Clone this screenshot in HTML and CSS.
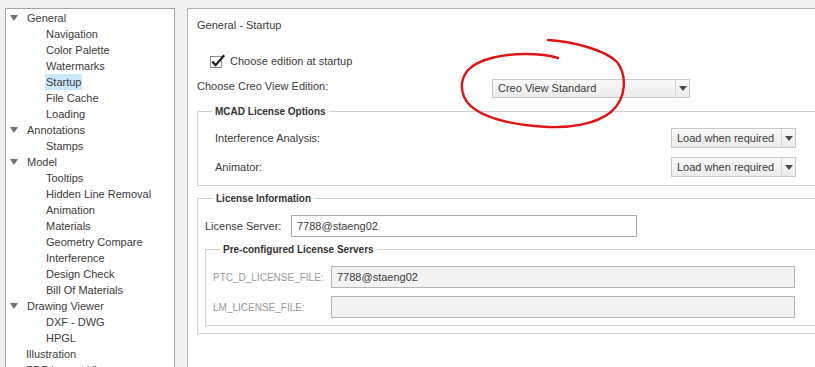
FILE: index.html
```html
<!DOCTYPE html>
<html>
  <head>
    <title>Preferences - General - Startup</title>
    <link rel="stylesheet" href="styles.css">
  </head>
  <body>
    <div class="window">
      <div class="tree">
        <div class="tree-item parent"><span class="toggle"></span><span class="label">General</span></div>
        <div class="tree-item child"><span class="label">Navigation</span></div>
        <div class="tree-item child"><span class="label">Color Palette</span></div>
        <div class="tree-item child"><span class="label">Watermarks</span></div>
        <div class="tree-item child"><span class="label selected">Startup</span></div>
        <div class="tree-item child"><span class="label">File Cache</span></div>
        <div class="tree-item child"><span class="label">Loading</span></div>
        <div class="tree-item parent"><span class="toggle"></span><span class="label">Annotations</span></div>
        <div class="tree-item child"><span class="label">Stamps</span></div>
        <div class="tree-item parent"><span class="toggle"></span><span class="label">Model</span></div>
        <div class="tree-item child"><span class="label">Tooltips</span></div>
        <div class="tree-item child"><span class="label">Hidden Line Removal</span></div>
        <div class="tree-item child"><span class="label">Animation</span></div>
        <div class="tree-item child"><span class="label">Materials</span></div>
        <div class="tree-item child"><span class="label">Geometry Compare</span></div>
        <div class="tree-item child"><span class="label">Interference</span></div>
        <div class="tree-item child"><span class="label">Design Check</span></div>
        <div class="tree-item child"><span class="label">Bill Of Materials</span></div>
        <div class="tree-item parent"><span class="toggle"></span><span class="label">Drawing Viewer</span></div>
        <div class="tree-item child"><span class="label">DXF - DWG</span></div>
        <div class="tree-item child"><span class="label">HPGL</span></div>
        <div class="tree-item leaf"><span class="label">Illustration</span></div>
        <div class="tree-item leaf"><span class="label">PDF Layout Viewer</span></div>
      </div>

      <div class="page">
        <p class="page-title">General - Startup</p>

        <div class="check-row">
          <svg class="checkbox" width="16" height="14" viewBox="0 0 16 14">
            <rect x="0.5" y="2.5" width="11" height="11" fill="#fff" stroke="#8c8c8c"/>
            <path d="M2.3 7.6 L5.6 11.2 L14.2 1.2" fill="none" stroke="#1e1e1e" stroke-width="2.2" stroke-linejoin="miter"/>
          </svg>
          <span>Choose edition at startup</span>
        </div>

        <div class="edition-row">
          <span class="edition-label">Choose Creo View Edition:</span>
          <div class="combo combo-edition">
            <span class="combo-text">Creo View Standard</span>
            <span class="combo-arrow"></span>
          </div>
        </div>

        <fieldset class="group group-mcad">
          <legend>MCAD License Options</legend>
          <div class="option-row">
            <span>Interference Analysis:</span>
            <div class="combo combo-load">
              <span class="combo-text">Load when required</span>
              <span class="combo-arrow"></span>
            </div>
          </div>
          <div class="option-row">
            <span>Animator:</span>
            <div class="combo combo-load">
              <span class="combo-text">Load when required</span>
              <span class="combo-arrow"></span>
            </div>
          </div>
        </fieldset>

        <fieldset class="group group-license">
          <legend>License Information</legend>
          <div class="server-row">
            <span class="server-label">License Server:</span>
            <div class="field field-server">7788@staeng02</div>
          </div>

          <fieldset class="group group-preset">
            <legend>Pre-configured License Servers</legend>
            <div class="preset-row">
              <span class="preset-label">PTC_D_LICENSE_FILE:</span>
              <div class="field field-disabled">7788@staeng02</div>
            </div>
            <div class="preset-row">
              <span class="preset-label">LM_LICENSE_FILE:</span>
              <div class="field field-disabled"></div>
            </div>
          </fieldset>
        </fieldset>
      </div>
    </div>

    <!-- hand-drawn red circle around the edition dropdown -->
    <svg class="annotation" width="815" height="367" viewBox="0 0 815 367">
      <path d="M548 40 C575 42 605 50 617 62 C627 75 627 98 611 112 C596 124 571 128 548 127 C520 126 491 120 476 110 C460 100 458 82 468 70 C480 58 505 54 525 54 C540 54 552 56 558 58"
            fill="none" stroke="#e01414" stroke-width="2.4" stroke-linecap="round"/>
    </svg>
  </body>
</html>
```

FILE: styles.css
```css
* {
    box-sizing: border-box;
}

body {
    margin: 0;
    height: 367px;
    overflow: hidden;
    background-color: #f0f0f0;
    color: #3b3b3b;
    font-family: "Liberation Sans", Arial, sans-serif;
    font-size: 11px;
}

.window {
    display: flex;
    align-items: flex-start;
    gap: 12px;
    padding: 8px 0 0 5px;
}

/* left navigation tree */
.tree {
    flex-shrink: 0;
    width: 170px;
    height: 420px;
    padding-top: 1px;
    background-color: #fff;
    border: 1px solid #a3a3a3;
}

.tree-item {
    display: flex;
    align-items: center;
    height: 16px;
    line-height: 16px;
    white-space: nowrap;
}

.parent {
    padding-left: 4px;
}

.child {
    padding-left: 39px;
}

.leaf {
    padding-left: 19px;
}

.toggle {
    display: flex;
    align-items: center;
    width: 16px;
    height: 16px;
}

.toggle::before {
    content: "";
    border-left: 4px solid transparent;
    border-right: 4px solid transparent;
    border-top: 6px solid #707070;
}

.label {
    padding: 0 1px;
    height: 16px;
}

.selected {
    background-color: #cce8ff;
}

/* right settings page */
.page {
    flex-shrink: 0;
    width: 660px;
    height: 420px;
    padding: 8px 9px;
    background-color: #fff;
    border: 1px solid #b4b4b4;
}

.page-title {
    margin: 0;
    line-height: 16px;
}

.check-row {
    display: flex;
    align-items: center;
    gap: 4px;
    height: 14px;
    margin-top: 21px;
    padding-left: 13px;
}

.edition-row {
    display: flex;
    margin-top: 11px;
}

.edition-label {
    width: 295px;
    line-height: 14px;
}

.combo {
    display: flex;
    height: 20px;
    border: 1px solid #c9c9c9;
    background: linear-gradient(#fafafa, #ebebeb);
}

.combo-edition {
    width: 198px;
    height: 19px;
}

.combo-load {
    width: 125px;
}

.combo-text {
    flex: 1;
    padding-left: 5px;
    line-height: 17px;
    white-space: nowrap;
}

.combo-load .combo-text {
    line-height: 18px;
}

.combo-arrow {
    display: flex;
    align-items: center;
    justify-content: center;
    width: 14px;
    border-left: 1px solid #d6d6d6;
}

.combo-arrow::before {
    content: "";
    border-left: 4px solid transparent;
    border-right: 4px solid transparent;
    border-top: 5px solid #4a4a4a;
}

/* fieldsets */
.group {
    min-width: 0;
    margin: 0;
    border: 1px solid #d0d0d0;
}

.group legend {
    padding: 2px 3px 0;
    font-size: 10px;
    font-weight: bold;
    line-height: 12px;
    color: #333;
}

.group-mcad {
    margin-top: 6px;
    padding: 10px 40px 8px 14px;
}

.option-row {
    display: flex;
    align-items: center;
    justify-content: space-between;
    padding-left: 3px;
}

.option-row + .option-row {
    margin-top: 9px;
}

.group-license {
    margin-top: 5px;
    padding: 10px 15px 7px 7px;
}

.group-license > legend {
    margin-left: 8px;
}

.server-row,
.preset-row {
    display: flex;
    align-items: center;
}

.server-label {
    width: 86px;
}

.field {
    height: 22px;
    padding-left: 5px;
    line-height: 20px;
    background-color: #fff;
    border: 1px solid #a9a9a9;
}

.field-server {
    width: 346px;
}

.group-preset {
    margin-top: 5px;
    padding: 10px 25px 7px 7px;
}

.group-preset > legend {
    margin-left: 7px;
}

.preset-row + .preset-row {
    margin-top: 8px;
}

.preset-label {
    width: 118px;
    font-size: 10px;
    color: #999;
}

.field-disabled {
    flex: 1;
    background-color: #f2f2f2;
    border-color: #b5b5b5;
}

.annotation {
    position: absolute;
    top: 0;
    left: 0;
    pointer-events: none;
}
```
